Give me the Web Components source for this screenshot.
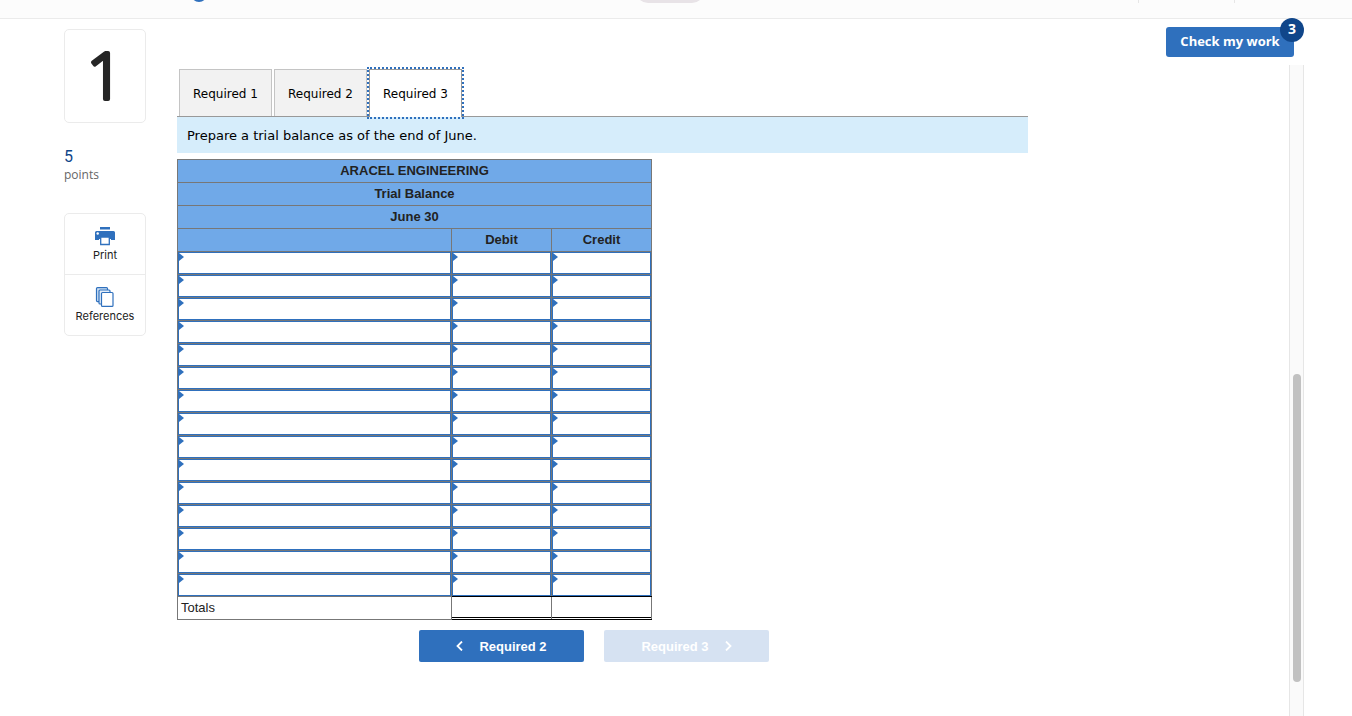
<!DOCTYPE html>
<html lang="en">
<head>
<meta charset="utf-8">
<meta name="viewport" content="width=device-width, initial-scale=1">
<title>Question 1 - Trial Balance</title>
<style>
  body {
    margin: 0;
    background: #fff;
    color: #222;
    font-family: "Liberation Sans", Arial, sans-serif;
    --blue: #2f70bd;
    --navy: #10468a;
    --line: #ebebeb;
    --ui-font: "Open Sans", sans-serif;
  }
</style>
</head>
<body>
<question-page>
  <app-header slot="header"></app-header>
  <question-sidebar slot="sidebar" number="1" points="5"></question-sidebar>
  <check-button slot="action" count="3">Check my work</check-button>
  <section-tabs slot="content" tabs="Required 1,Required 2,Required 3" selected="2">
    Prepare a trial balance as of the end of June.
  </section-tabs>
  <trial-balance slot="content" company="ARACEL ENGINEERING" date="June 30" rows="15"></trial-balance>
  <step-nav slot="content" previous="Required 2" next="Required 3"></step-nav>
</question-page>

<script>
/**
 * question-page
 *
 * Page frame: header strip, sidebar, action row, content and scroll track.
 *
 * Slots: header, sidebar, action, content
 */
class QuestionPage extends HTMLElement {
  connectedCallback() {
    this.attachShadow({ mode: 'open' }).innerHTML = `
      <style>
        :host {
          display: flex;
          flex-direction: column;
          height: 100vh;
          overflow: hidden;
        }

        .body {
          flex: 1;
          display: flex;
          min-height: 0;
          padding: 0 48px 0 64px;
        }

        .sidebar {
          flex: none;
          width: 82px;
          padding-top: 10px;
          margin-right: 31px;
        }

        .workspace {
          flex: 1;
          display: flex;
          flex-direction: column;
          min-width: 0;
        }

        .actions {
          display: flex;
          justify-content: flex-end;
          flex: none;
          height: 38px;
          padding: 8px 10px 0 0;
        }

        .scroller {
          flex: 1;
          display: flex;
          justify-content: space-between;
          min-height: 0;
        }

        main {
          flex: 1;
          max-width: 851px;
          padding-top: 4px;
        }

        /* Scroll track and its thumb */
        .track {
          display: grid;
          grid-template-rows: 309fr 308fr 34fr;
          flex: none;
          width: 13px;
          border: solid #e6e6e6;
          border-width: 0 1px;
          background: #fafafa;
        }

        .thumb {
          grid-row: 2;
          justify-self: center;
          width: 8px;
          border-radius: 4px;
          background: #c1c1c1;
        }
      </style>

      <slot name="header"></slot>
      <div class="body">
        <aside class="sidebar"><slot name="sidebar"></slot></aside>
        <div class="workspace">
          <div class="actions"><slot name="action"></slot></div>
          <div class="scroller">
            <main><slot name="content"></slot></main>
            <div class="track"><div class="thumb"></div></div>
          </div>
        </div>
      </div>
    `;
  }
}

/**
 * app-header
 *
 * Lower edge of the application bar; its items are clipped by the window top.
 */
class AppHeader extends HTMLElement {
  connectedCallback() {
    this.attachShadow({ mode: 'open' }).innerHTML = `
      <style>
        :host {
          display: grid;
          grid-template-columns: 1fr auto 1fr;
          grid-template-rows: 3px;
          align-items: end;
          flex: none;
          box-sizing: border-box;
          height: 19px;
          padding: 0 21px 15px 191px;
          border-bottom: 1px solid var(--line);
          background: #fcfcfc;
          overflow: hidden;
        }

        .dot {
          width: 16px;
          height: 16px;
          margin-bottom: 1px;
          border-radius: 50%;
          background: var(--blue);
        }

        .pill {
          width: 68px;
          height: 24px;
          margin-right: 182px;
          border-radius: 12px;
          background: #e8e3e7;
        }

        .tools {
          justify-self: end;
          width: 95px;
          height: 24px;
          margin-right: 96px;
          border: solid #e6e6e6;
          border-width: 0 1px;
        }
      </style>

      <div class="dot"></div>
      <div class="pill"></div>
      <div class="tools"></div>
    `;
  }
}

/**
 * question-sidebar
 *
 * Attributes:
 *   - number (string): Question number
 *   - points (string): Points the question is worth
 */
class QuestionSidebar extends HTMLElement {
  connectedCallback() {
    const number = this.getAttribute('number') || '';
    const points = this.getAttribute('points') || '0';

    this.attachShadow({ mode: 'open' }).innerHTML = `
      <style>
        :host {
          display: block;
          font-family: var(--ui-font);
        }

        .number {
          box-sizing: border-box;
          height: 94px;
          border: 1px solid var(--line);
          border-radius: 5px;
        }

        .number svg {
          width: 100%;
          height: 100%;
        }

        /* Round joins soften the ends of the digit */
        .number text {
          fill: #262626;
          stroke: #262626;
          stroke-width: 4px;
          stroke-linejoin: round;
          font: 300 64px "Open Sans", sans-serif;
          text-anchor: middle;
        }

        .points {
          margin: 24px 0 30px;
          font-size: 12px;
          line-height: 16px;
          color: #666;
        }

        .points b {
          display: block;
          font-family: Roboto, sans-serif;
          font-size: 16px;
          font-weight: 400;
          line-height: 20px;
          color: var(--navy);
        }

        .tools {
          border: 1px solid var(--line);
          border-radius: 5px;
        }

        button {
          display: flex;
          flex-direction: column;
          align-items: center;
          gap: 1px;
          width: 100%;
          height: 60px;
          padding: 12px 0 0;
          border: 0;
          background: none;
          font: 11px/16px Inter, sans-serif;
          color: #222;
        }

        button + button {
          height: 61px;
          border-top: 1px solid var(--line);
        }

        svg {
          display: block;
          flex: none;
        }
      </style>

      <div class="number"><svg viewBox="0 0 80 92"><text x="40" y="69">${number}</text></svg></div>
      <div class="points"><b>${points}</b>points</div>
      <div class="tools">
        <button type="button">
          <svg width="20" height="20" viewBox="0 0 20 20" aria-hidden="true">
            <path fill="#2f70bd" d="M5 1h10v2.500H5zM1.500 5h17A1.500 1.500 0 0 1 20 6.500V14h-4v-1H4v1H0V6.500A1.500 1.500 0 0 1 1.500 5z"/>
            <path fill="#fff" stroke="#2f70bd" stroke-width="1.300" d="M5.700 11h8.600v7.500H5.700z"/>
            <circle cx="2.700" cy="7.500" r="1.200" fill="#fff"/>
          </svg>
          Print
        </button>
        <button type="button">
          <svg width="20" height="20" viewBox="0 0 20 20" aria-hidden="true">
            <g fill="#fff" stroke="#2f70bd" stroke-width="1.200">
              <rect x="1.500" y=".6" width="11" height="14" rx="1" fill="#cfe0f3"/>
              <rect x="4" y="3" width="11" height="14" rx="1" fill="#e4eef9"/>
              <rect x="6.500" y="5.500" width="11.500" height="13.900" rx="1"/>
            </g>
          </svg>
          References
        </button>
      </div>
    `;
  }
}

/**
 * check-button
 *
 * Attributes:
 *   - count (string): Number shown in the badge
 */
class CheckButton extends HTMLElement {
  connectedCallback() {
    this.attachShadow({ mode: 'open' }).innerHTML = `
      <style>
        :host {
          display: block;
        }

        button {
          position: relative;
          width: 128px;
          height: 30px;
          padding: 0 0 2px;
          border: 0;
          border-radius: 3px;
          background: var(--blue);
          color: #fff;
          font: 700 13px/28px var(--ui-font);
        }

        /* Badge over the corner of the button */
        .badge {
          position: absolute;
          top: -9px;
          right: -10px;
          width: 24px;
          height: 24px;
          border-radius: 50%;
          background: var(--navy);
          font-size: 14px;
          line-height: 22px;
        }
      </style>

      <button type="button"><slot></slot><span class="badge">${this.getAttribute('count') || '0'}</span></button>
    `;
  }
}

/**
 * section-tabs
 *
 * Attributes:
 *   - tabs (string): Comma separated labels
 *   - selected (string): Index of the open tab
 */
class SectionTabs extends HTMLElement {
  connectedCallback() {
    const selected = Number(this.getAttribute('selected') || 0);
    const tabs = (this.getAttribute('tabs') || '').split(',').map((label, i) =>
      `<button type="button" role="tab" aria-selected="${i === selected}">${label}</button>`).join('');

    this.attachShadow({ mode: 'open' }).innerHTML = `
      <style>
        :host {
          display: block;
          font-family: "DejaVu Sans", Verdana, sans-serif;
          color: #000;
        }

        .tabs {
          display: flex;
          gap: 2px;
          padding-left: 2px;
          border-bottom: 1px solid #999;
        }

        button {
          width: 93px;
          height: 47px;
          padding: 2px 0 0;
          border: 1px solid #c4c4c4;
          border-bottom: 0;
          background: #f2f2f2;
          color: #000;
          font: inherit;
          font-size: 12px;
          white-space: nowrap;
        }

        button[aria-selected="true"] {
          height: 48px;
          margin-bottom: -1px;
          padding: 0;
          border-color: #999;
          background: #fff;
          outline: 2px dotted var(--blue);
          outline-offset: 0;
        }

        .prompt {
          padding: 1px 10px 0;
          background: #d6edfb;
          font-size: 13px;
          line-height: 35px;
        }
      </style>

      <div class="tabs" role="tablist">${tabs}</div>
      <div class="prompt"><slot></slot></div>
    `;
  }
}

/**
 * trial-balance
 *
 * Attributes:
 *   - company (string): Company name
 *   - date (string): Date of the statement
 *   - rows (string): Number of answer rows
 */
class TrialBalance extends HTMLElement {
  connectedCallback() {
    const columns = ['Account', 'Debit', 'Credit'];
    let rows = '';
    for (let i = 1; i <= Number(this.getAttribute('rows') || 0); i++) {
      rows += `<tr>${columns.map(c => `<td><input type="text" aria-label="${c} ${i}"></td>`).join('')}</tr>`;
    }

    this.attachShadow({ mode: 'open' }).innerHTML = `
      <style>
        :host {
          display: block;
          margin-top: 6px;
          font-size: 13px;
        }

        table {
          width: 475px;
          table-layout: fixed;
          border-collapse: collapse;
        }

        .amount {
          width: 100px;
        }

        th, td {
          box-sizing: border-box;
          height: 23px;
          padding: 0;
          border: 1px solid #777;
          line-height: 22px;
        }

        th {
          background: #70a9e8;
        }

        input {
          display: block;
          box-sizing: border-box;
          width: 100%;
          height: 22px;
          padding: 0 8px;
          border: 1px solid var(--blue);
          border-radius: 0;
          background: #fff;
          font: inherit;
        }

        td {
          background: #fff;
        }

        tbody td {
          position: relative;
        }

        /* Marker in the corner of an editable cell */
        tbody td::after {
          content: "";
          position: absolute;
          top: 1px;
          left: 1px;
          border: solid transparent;
          border-width: 4px 0 4px 5px;
          border-left-color: var(--blue);
        }

        tfoot th {
          padding-left: 3px;
          background: #fff;
          font-weight: 400;
          text-align: left;
        }

        /* Rule above and below the totals */
        tbody tr:last-child td + td,
        tfoot td {
          border-bottom-color: #000;
        }

        /* Upper line of the double rule */
        .sum {
          height: 20px;
          margin-bottom: 1px;
          border-bottom: 1px solid #000;
        }
      </style>

      <table>
        <colgroup><col><col class="amount"><col class="amount"></colgroup>
        <thead>
          <tr><th colspan="3">${this.getAttribute('company')}</th></tr>
          <tr><th colspan="3">Trial Balance</th></tr>
          <tr><th colspan="3">${this.getAttribute('date')}</th></tr>
          <tr><th></th><th>Debit</th><th>Credit</th></tr>
        </thead>
        <tbody>${rows}</tbody>
        <tfoot>
          <tr><th scope="row">Totals</th><td><div class="sum"></div></td><td><div class="sum"></div></td></tr>
        </tfoot>
      </table>
    `;
  }
}

/**
 * step-nav
 *
 * Attributes:
 *   - previous (string): Label of the back button
 *   - next (string): Label of the forward button
 */
class StepNav extends HTMLElement {
  connectedCallback() {
    this.attachShadow({ mode: 'open' }).innerHTML = `
      <style>
        :host {
          display: flex;
          justify-content: center;
          gap: 20px;
          margin-top: 10px;
          padding-right: 17px;
        }

        button {
          display: flex;
          align-items: center;
          justify-content: center;
          gap: 16px;
          width: 165px;
          height: 32px;
          padding: 0;
          border: 0;
          border-radius: 2px;
          background: var(--blue);
          color: #fff;
          font: 700 13px "Liberation Sans", Arial, sans-serif;
        }

        button:disabled {
          background: #d6e2f2;
        }

        svg {
          fill: none;
          stroke: #fff;
          stroke-width: 1.8;
        }
      </style>

      <button type="button">
        <svg width="7" height="10" viewBox="0 0 7 10" aria-hidden="true"><path d="M6 .5 1.500 5 6 9.500"/></svg>
        ${this.getAttribute('previous')}
      </button>
      <button type="button" disabled>
        ${this.getAttribute('next')}
        <svg width="7" height="10" viewBox="0 0 7 10" aria-hidden="true"><path d="M1 .5 5.500 5 1 9.500"/></svg>
      </button>
    `;
  }
}

customElements.define('question-page', QuestionPage);
customElements.define('app-header', AppHeader);
customElements.define('question-sidebar', QuestionSidebar);
customElements.define('check-button', CheckButton);
customElements.define('section-tabs', SectionTabs);
customElements.define('trial-balance', TrialBalance);
customElements.define('step-nav', StepNav);
</script>
</body>
</html>
